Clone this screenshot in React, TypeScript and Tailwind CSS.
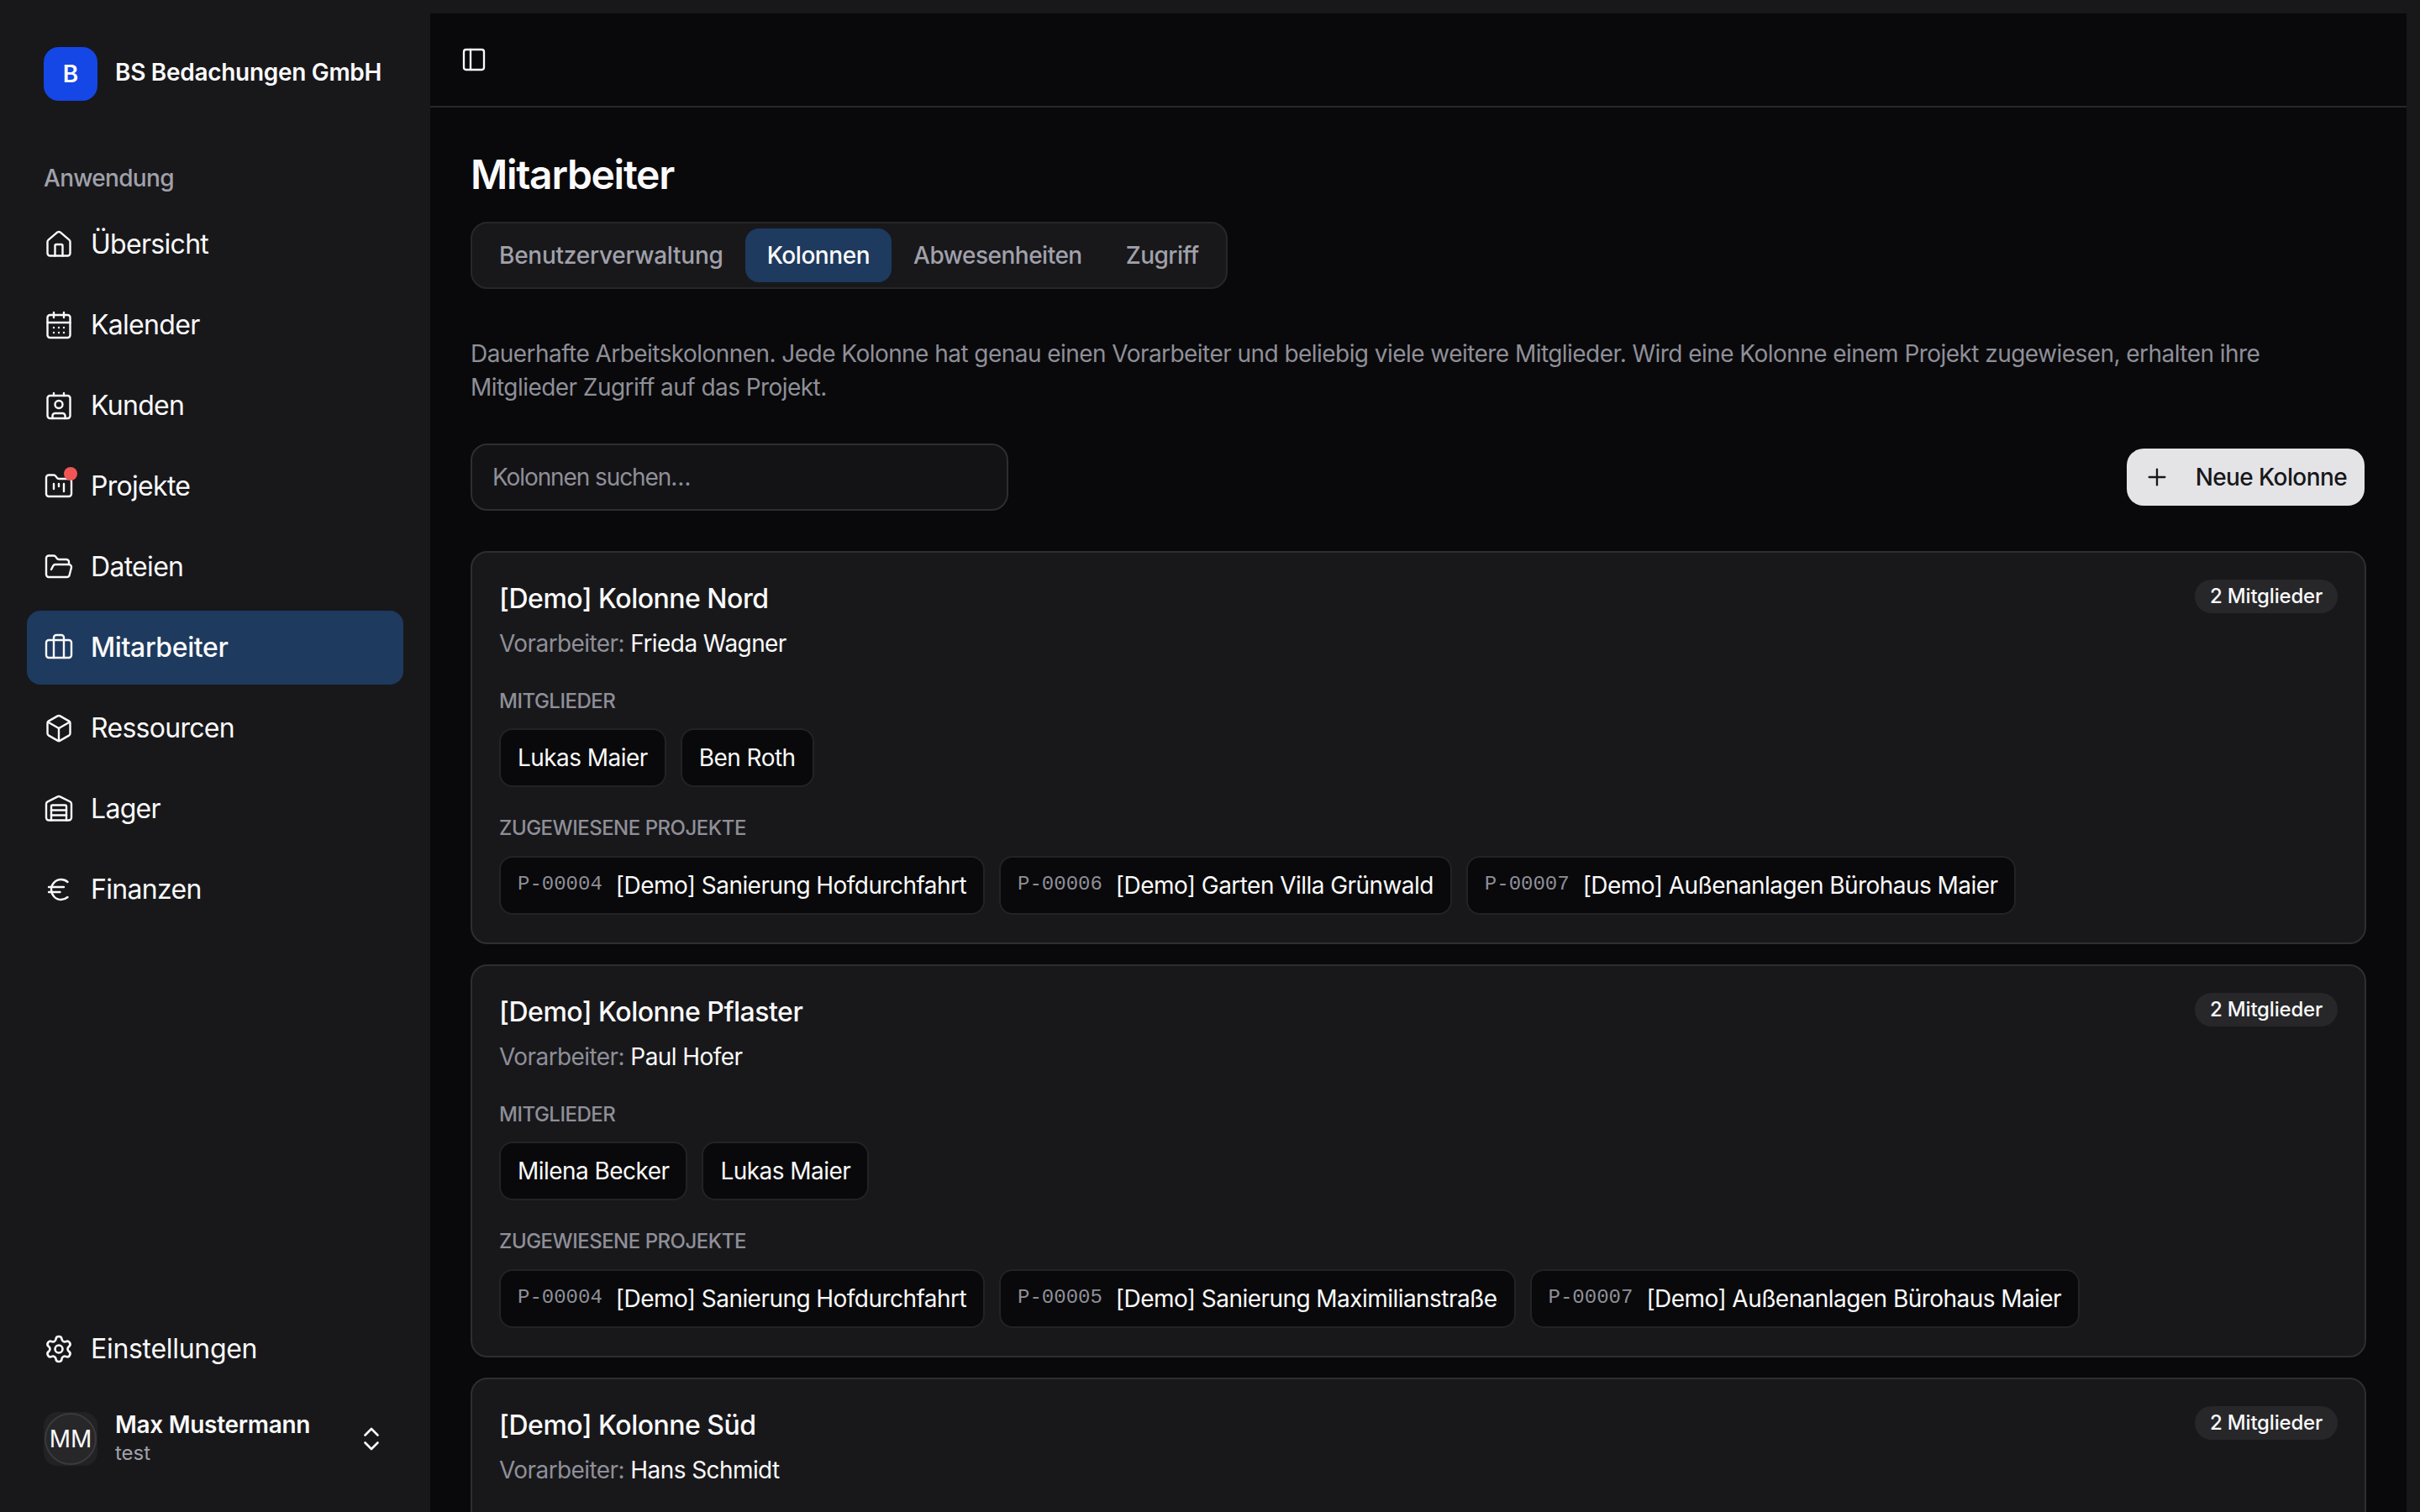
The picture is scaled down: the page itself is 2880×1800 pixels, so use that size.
import React from "react";
import {
  Box,
  Briefcase,
  CalendarDays,
  ChevronsUpDown,
  Contact,
  Euro,
  FolderKanban,
  FolderOpen,
  House,
  PanelLeft,
  Plus,
  Settings,
  Warehouse,
} from "lucide-react";

const navItems = [
  { label: "Übersicht", icon: House },
  { label: "Kalender", icon: CalendarDays },
  { label: "Kunden", icon: Contact },
  { label: "Projekte", icon: FolderKanban, dot: true },
  { label: "Dateien", icon: FolderOpen },
  { label: "Mitarbeiter", icon: Briefcase, active: true },
  { label: "Ressourcen", icon: Box },
  { label: "Lager", icon: Warehouse },
  { label: "Finanzen", icon: Euro },
];

const tabs = ["Benutzerverwaltung", "Kolonnen", "Abwesenheiten", "Zugriff"];

const columns = [
  {
    name: "[Demo] Kolonne Nord",
    lead: "Frieda Wagner",
    members: ["Lukas Maier", "Ben Roth"],
    projects: [
      ["P-00004", "[Demo] Sanierung Hofdurchfahrt"],
      ["P-00006", "[Demo] Garten Villa Grünwald"],
      ["P-00007", "[Demo] Außenanlagen Bürohaus Maier"],
    ],
  },
  {
    name: "[Demo] Kolonne Pflaster",
    lead: "Paul Hofer",
    members: ["Milena Becker", "Lukas Maier"],
    projects: [
      ["P-00004", "[Demo] Sanierung Hofdurchfahrt"],
      ["P-00005", "[Demo] Sanierung Maximilianstraße"],
      ["P-00007", "[Demo] Außenanlagen Bürohaus Maier"],
    ],
  },
  {
    name: "[Demo] Kolonne Süd",
    lead: "Hans Schmidt",
    members: [],
    projects: [],
  },
];

function Sidebar() {
  return (
    <aside className="w-[512px] h-full shrink-0 flex flex-col px-[32px] text-[#fafafa]">
      <div className="flex items-center gap-[21px] px-[20px] pt-[56px]">
        <div className="w-[64px] h-[64px] rounded-[18px] bg-[#1447e6] flex items-center justify-center text-[28px] font-semibold">
          B
        </div>
        <span className="text-[28px] font-semibold tracking-[-0.3px] -mt-[4px]">BS Bedachungen GmbH</span>
      </div>

      <div className="px-[20px] mt-[74px] h-[36px] flex items-center text-[28px] font-medium tracking-[-0.7px] text-[#a1a1aa]">
        Anwendung
      </div>

      {/* Navigation */}
      <nav className="mt-[17px] flex flex-col gap-[8px]">
        {navItems.map((item) => (
          <div
            key={item.label}
            className={
              item.active
                ? "h-[88px] rounded-[16px] bg-[#1e3a5f] flex items-center gap-[20px] px-[20px] font-medium"
                : "h-[88px] rounded-[16px] flex items-center gap-[20px] px-[20px]"
            }
          >
            <span className="relative w-[36px] h-[36px] shrink-0">
              <item.icon className="w-[36px] h-[36px]" strokeWidth={1.6} />
              {item.dot && (
                <span className="absolute -top-[5px] -right-[4px] w-[16px] h-[16px] rounded-full bg-[#f25555]" />
              )}
            </span>
            <span className={item.active ? "text-[32px] tracking-[-0.4px]" : "text-[32px] tracking-[-0.7px]"}>
              {item.label}
            </span>
          </div>
        ))}
      </nav>

      <div className="mt-auto h-[88px] flex items-center gap-[20px] px-[20px]">
        <Settings className="w-[36px] h-[36px] shrink-0" strokeWidth={1.75} />
        <span className="text-[32px] tracking-[-0.3px]">Einstellungen</span>
      </div>

      <div className="mt-[29px] mb-[54px] flex items-center px-[20px]">
        <div className="w-[64px] h-[64px] rounded-[16px] bg-[#222225] flex items-center justify-center">
          <div className="w-[62px] h-[62px] rounded-full bg-[#27272a] border-2 border-[#3a3a3e] flex items-center justify-center text-[28px]">
            MM
          </div>
        </div>
        <div className="ml-[21px] flex-1 flex flex-col">
          <span className="text-[28px] font-semibold tracking-[-0.3px] leading-[36px] -mt-[1px]">Max Mustermann</span>
          <span className="text-[24px] leading-[32px] text-[#a1a1aa]">test</span>
        </div>
        <ChevronsUpDown className="w-[36px] h-[36px]" strokeWidth={1.75} />
      </div>
    </aside>
  );
}

function Chip({ children }: { children: React.ReactNode }) {
  return (
    <div className="h-[70px] rounded-[16px] bg-[#09090b] border-2 border-[#232326] px-[20px] flex items-center text-[28px] tracking-[-0.55px] text-[#fafafa] whitespace-nowrap">
      {children}
    </div>
  );
}

function ColumnCard({ column }: { column: (typeof columns)[number] }) {
  return (
    <div className="relative h-[468px] shrink-0 rounded-[20px] bg-[#18181b] border-2 border-[#2e2e32] px-[32px] pt-[33px]">
      <div className="absolute top-[32px] right-[32px] h-[40px] rounded-full bg-[#27272a] px-[18px] flex items-center text-[24px] font-medium tracking-[-0.2px] text-[#fafafa]">
        2 Mitglieder
      </div>
      <h2 className="text-[32px] leading-[44px] font-medium tracking-[-0.5px] text-[#fafafa]">{column.name}</h2>
      <p className="mt-[11px] text-[28px] leading-[40px] tracking-[-0.58px] text-[#8f8f98]">
        Vorarbeiter: <span className="text-[#fafafa]">{column.lead}</span>
      </p>
      {column.members.length > 0 && (
        <>
          <div className="mt-[33px] text-[24px] leading-[32px] uppercase font-medium tracking-[-0.5px] text-[#8f8f98]">Mitglieder</div>
          <div className="mt-[16px] flex gap-[17px]">
            {column.members.map((m) => (
              <Chip key={m}>{m}</Chip>
            ))}
          </div>
          <div className="mt-[33px] text-[24px] leading-[32px] uppercase font-medium tracking-[-0.5px] text-[#8f8f98]">Zugewiesene Projekte</div>
          <div className="mt-[17px] flex gap-[17px]">
            {column.projects.map(([code, title]) => (
              <Chip key={code}>
                <span className="font-['Liberation_Mono',monospace] text-[24px] tracking-normal text-[#8f8f98] mr-[16px] -mt-[3px]">{code}</span>
                {title}
              </Chip>
            ))}
          </div>
        </>
      )}
    </div>
  );
}

export default function App() {
  return (
    <div className="w-[2880px] h-[1800px] overflow-hidden flex bg-[#18181b] font-['Inter',sans-serif]">
      <Sidebar />
      <main className="flex-1 mt-[16px] mr-[16px] bg-[#09090b] flex flex-col overflow-hidden">
        <header className="h-[112px] shrink-0 border-b-2 border-[#27272a] flex items-center pl-[36px] text-[#fafafa]">
          <PanelLeft className="w-[32px] h-[32px]" strokeWidth={1.75} />
        </header>

        <div className="px-[48px] pt-[50px] flex flex-col">
          <h1 className="text-[48px] leading-[60px] font-semibold text-[#fafafa] tracking-[-1.3px]">Mitarbeiter</h1>

          <div className="mt-[26px] self-start h-[80px] rounded-[20px] bg-[#18181b] border-2 border-[#27272a] p-[6px] flex items-center">
            {tabs.map((t) => (
              <div
                key={t}
                className={
                  t === "Kolonnen"
                    ? "h-[64px] rounded-[16px] bg-[#1e3a5f] text-[#fafafa] font-medium tracking-[-0.45px] px-[26px] flex items-center text-[28px]"
                    : t === "Benutzerverwaltung"
                      ? "h-[64px] rounded-[16px] text-[#a1a1aa] font-medium tracking-[-0.25px] px-[26px] flex items-center text-[28px]"
                      : "h-[64px] rounded-[16px] text-[#a1a1aa] font-medium tracking-[-0.5px] px-[26px] flex items-center text-[28px]"
                }
              >
                {t}
              </div>
            ))}
          </div>

          <p className="mt-[57px] text-[28px] leading-[40px] tracking-[-0.55px] text-[#8f8f98]">
            Dauerhafte Arbeitskolonnen. Jede Kolonne hat genau einen Vorarbeiter und beliebig viele weitere Mitglieder. Wird eine Kolonne einem Projekt zugewiesen, erhalten ihre Mitglieder Zugriff auf das Projekt.
          </p>

          <div className="mt-[47px] flex items-center justify-between">
            <div className="w-[640px] h-[80px] rounded-[20px] bg-[#131316] border-2 border-[#2e2e32] px-[24px] flex items-center text-[28px] tracking-[-1.1px] text-[#8f8f98]">
              Kolonnen suchen…
            </div>
            <div className="h-[68px] mr-[2px] rounded-[20px] bg-[#e4e4e7] text-[#18181b] flex items-center pl-[20px] pr-[21px] gap-[30px] text-[28px] tracking-[-0.6px] font-medium">
              <Plus className="w-[32px] h-[32px]" strokeWidth={1.75} />
              Neue Kolonne
            </div>
          </div>

          <div className="mt-[48px] flex flex-col gap-[24px]">
            {columns.map((c) => (
              <ColumnCard key={c.name} column={c} />
            ))}
          </div>
        </div>
      </main>
    </div>
  );
}
